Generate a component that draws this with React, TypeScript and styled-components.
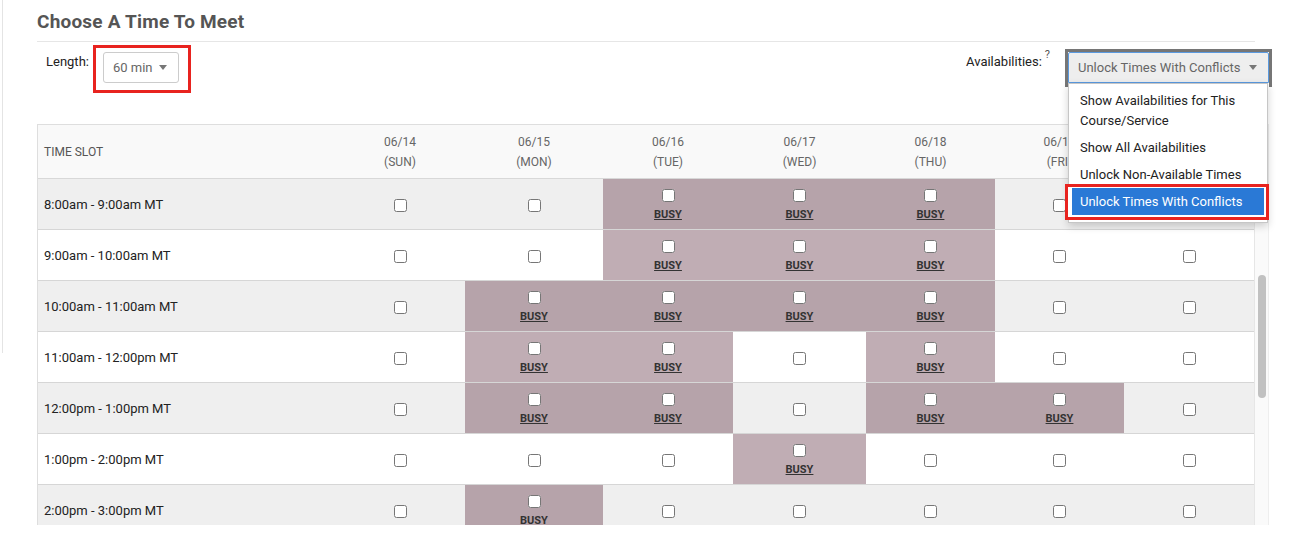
import React from "react";
import styled, { createGlobalStyle } from "styled-components";

const GlobalStyle = createGlobalStyle`
  html, body { margin: 0; padding: 0; background: #fff; }
  body { font-family: Roboto, "Liberation Sans", Arial, sans-serif; color: #222; }
  * { box-sizing: border-box; }
`;

const Page = styled.div`
  display: flex;
  align-items: flex-start;
  width: 1316px;
  height: 560px;
  overflow: hidden;
`;

const SideEdge = styled.div`
  flex-shrink: 0;
  width: 3px;
  height: 353px;
  border-right: 1px solid #e4e4e4;
`;

const Main = styled.main`
  width: 1269px;
  padding-left: 34px;
`;

const TitleBar = styled.div`
  width: 1218px;
  padding: 10px 0 7px;
  border-bottom: 1px solid #e6e6e6;
`;

const Title = styled.h2`
  margin: 0;
  font-size: 19px;
  font-weight: 700;
  line-height: 24px;
  letter-spacing: 0.2px;
  color: #555;
`;

const Controls = styled.div`
  display: flex;
  justify-content: space-between;
  align-items: flex-start;
  height: 82px;
  padding-top: 3px;
`;

const FieldGroup = styled.div<{ $indent?: number }>`
  display: flex;
  align-items: flex-start;
  padding-left: ${(p) => p.$indent ?? 0}px;
`;

const Label = styled.span`
  margin-top: 9px;
  font-size: 13px;
  line-height: 16px;
  color: #222;
`;

const Hint = styled.span`
  margin: 4px 15px 0 3px;
  font-size: 11px;
  line-height: 12px;
  color: #555;
`;

const Callout = styled.div`
  margin-left: 4px;
  padding: 4px 9px 7px 7px;
  border: 3px solid #e8231f;
`;

const SelectAnchor = styled.div`
  position: relative;
`;

const SelectBox = styled.div<{ $w: number; $open?: boolean }>`
  display: flex;
  align-items: center;
  justify-content: space-between;
  width: ${(p) => p.$w}px;
  height: 31px;
  padding: 0 11px 0 9px;
  font-size: 13px;
  color: #666;
  background: ${(p) => (p.$open ? "#eeeeee" : "#fff")};
  border: 1px solid ${(p) => (p.$open ? "#5a9ae0" : "#cccccc")};
  border-radius: ${(p) => (p.$open ? "2px 2px 0 0" : "3px")};
  white-space: nowrap;
`;

const Caret = styled.span`
  width: 0;
  height: 0;
  border-left: 4px solid transparent;
  border-right: 4px solid transparent;
  border-top: 5px solid #777;
`;

const FocusFrame = styled.div`
  margin-top: 4px;
  height: 38px;
  border: 3px solid #767676;
  border-bottom: none;
`;

const Menu = styled.ul`
  position: absolute;
  top: 31px;
  left: 0;
  z-index: 10;
  width: 200px;
  margin: 0;
  padding: 3px 0 2px;
  list-style: none;
  background: #fff;
  border: 1px solid #c6c6c6;
  box-shadow: 0 3px 8px rgba(0, 0, 0, 0.18);
`;

const MenuItem = styled.li`
  padding: 3.5px 8px 3.5px 11px;
  font-size: 13px;
  line-height: 20px;
  color: #222;
`;

const ActiveFrame = styled.li`
  margin: -4px -2px 0 -4px;
  padding: 1px 2px 2px 4px;
  border: 3px solid #e8231f;
  background: #fff;
`;

const ActiveItem = styled.div`
  padding: 3.5px 8px;
  font-size: 13px;
  line-height: 20px;
  color: #fff;
  background: #2a79d6;
`;

const TableArea = styled.div`
  display: flex;
  width: 1232px;
  height: 401px;
`;

const Viewport = styled.div`
  width: 1217px;
  height: 401px;
  overflow: hidden;
`;

const Grid = styled.table`
  width: 1217px;
  table-layout: fixed;
  border-collapse: separate;
  border-spacing: 0;
  border-top: 1px solid #dedede;
  border-left: 1px solid #dedede;
`;

const Col = styled.col<{ $w: number }>`
  width: ${(p) => p.$w}px;
`;

const HeadCell = styled.th<{ $left?: boolean }>`
  height: 54px;
  padding: 0 ${(p) => (p.$left ? "6px" : "0")};
  text-align: ${(p) => (p.$left ? "left" : "center")};
  font-size: 12px;
  font-weight: 400;
  line-height: 20px;
  color: ${(p) => (p.$left ? "#555" : "#666")};
  background: #f9f9f9;
  border-bottom: 1px solid #d8d8d8;
`;

const Row = styled.tr<{ $shaded: boolean }>`
  background: ${(p) => (p.$shaded ? "#efefef" : "#fff")};
`;

const SlotCell = styled.td`
  height: 50px;
  padding: 0 6px;
  font-size: 13px;
  color: #222;
  border-bottom: 1px solid #d6d6d6;
  white-space: nowrap;
`;

const DayCell = styled.td<{ $busy: boolean; $shaded: boolean }>`
  height: 50px;
  padding: 0;
  border-bottom: 1px solid #d6d6d6;
  background: ${(p) =>
    p.$busy ? (p.$shaded ? "#b6a3aa" : "#c0adb4") : "transparent"};
`;

const CellStack = styled.div`
  display: flex;
  flex-direction: column;
  align-items: center;
  justify-content: center;
  gap: 6px;
  height: 50px;
  padding-top: 2px;
`;

const Check = styled.input`
  width: 13px;
  height: 13px;
  margin: 0;
`;

const BusyTag = styled.span`
  font-size: 11px;
  font-weight: 700;
  line-height: 13px;
  color: #333;
  text-decoration: underline;
`;

const Track = styled.div`
  width: 15px;
  height: 401px;
  padding: 151px 0 0 3px;
  background: #fafafa;
  border-left: 1px solid #e6e6e6;
  border-right: 1px solid #eeeeee;
`;

const Thumb = styled.div`
  width: 8px;
  height: 123px;
  border-radius: 4px;
  background: #c1c1c1;
`;

const days: [string, string][] = [
  ["06/14", "SUN"],
  ["06/15", "MON"],
  ["06/16", "TUE"],
  ["06/17", "WED"],
  ["06/18", "THU"],
  ["06/19", "FRI"],
  ["06/20", "SAT"],
];

const colWidths = [297, 130, 138, 130, 133, 129, 129, 130];

const slots: { label: string; busy: number[] }[] = [
  { label: "8:00am - 9:00am MT", busy: [2, 3, 4] },
  { label: "9:00am - 10:00am MT", busy: [2, 3, 4] },
  { label: "10:00am - 11:00am MT", busy: [1, 2, 3, 4] },
  { label: "11:00am - 12:00pm MT", busy: [1, 2, 4] },
  { label: "12:00pm - 1:00pm MT", busy: [1, 2, 4, 5] },
  { label: "1:00pm - 2:00pm MT", busy: [3] },
  { label: "2:00pm - 3:00pm MT", busy: [1] },
];

const menuOptions = [
  "Show Availabilities for This Course/Service",
  "Show All Availabilities",
  "Unlock Non-Available Times",
];

export default function App() {
  return (
    <>
      <GlobalStyle />
      <Page>
        <SideEdge />
        <Main>
          <TitleBar>
            <Title>Choose A Time To Meet</Title>
          </TitleBar>

          <Controls>
            <FieldGroup $indent={9}>
              <Label>Length:</Label>
              <Callout>
                <SelectBox $w={76}>
                  60 min
                  <Caret />
                </SelectBox>
              </Callout>
            </FieldGroup>

            <FieldGroup>
              <Label>Availabilities:</Label>
              <Hint>?</Hint>
              <FocusFrame>
                <SelectAnchor>
                  <SelectBox $w={201} $open>
                    Unlock Times With Conflicts
                    <Caret />
                  </SelectBox>
                  <Menu>
                    {menuOptions.map((o) => (
                      <MenuItem key={o}>{o}</MenuItem>
                    ))}
                    <ActiveFrame>
                      <ActiveItem>Unlock Times With Conflicts</ActiveItem>
                    </ActiveFrame>
                  </Menu>
                </SelectAnchor>
              </FocusFrame>
            </FieldGroup>
          </Controls>

          <TableArea>
            <Viewport>
              <Grid>
                <colgroup>
                  {colWidths.map((w, i) => (
                    <Col key={i} $w={w} />
                  ))}
                </colgroup>
                <thead>
                  <tr>
                    <HeadCell $left>TIME SLOT</HeadCell>
                    {days.map(([d, n]) => (
                      <HeadCell key={d}>
                        {d}
                        <br />({n})
                      </HeadCell>
                    ))}
                  </tr>
                </thead>
                <tbody>
                  {slots.map((s, r) => {
                    const shaded = r % 2 === 0;
                    return (
                      <Row key={s.label} $shaded={shaded}>
                        <SlotCell>{s.label}</SlotCell>
                        {days.map(([d], c) => {
                          const busy = s.busy.includes(c);
                          return (
                            <DayCell key={d} $busy={busy} $shaded={shaded}>
                              <CellStack>
                                <Check type="checkbox" readOnly />
                                {busy && <BusyTag>BUSY</BusyTag>}
                              </CellStack>
                            </DayCell>
                          );
                        })}
                      </Row>
                    );
                  })}
                </tbody>
              </Grid>
            </Viewport>
            <Track>
              <Thumb />
            </Track>
          </TableArea>
        </Main>
      </Page>
    </>
  );
}
